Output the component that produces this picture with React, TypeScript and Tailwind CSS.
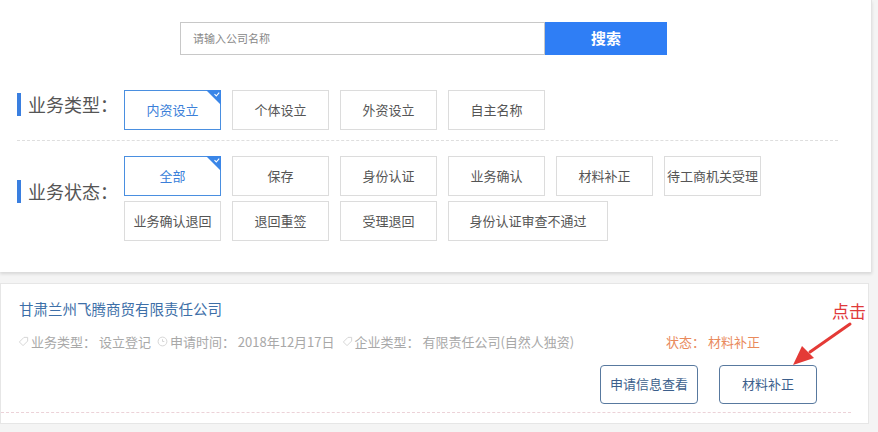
import React from 'react';

const typeOptions = ['内资设立', '个体设立', '外资设立', '自主名称'];
const statusRow1 = ['全部', '保存', '身份认证', '业务确认', '材料补正', '待工商机关受理'];
const statusRow2 = ['业务确认退回', '退回重签', '受理退回', '身份认证审查不通过'];

function CornerCheck() {
  return (
    <svg className="absolute -top-px -right-px" width="15" height="15" viewBox="0 0 15 15">
      <polygon points="0,0 15,0 15,15" fill="#3a86e8" />
      <path d="M8.5 4.2 L10.3 6 L13.2 2.6" stroke="#fff" strokeWidth="1.1" fill="none" />
    </svg>
  );
}

function OptionButton({ label, active, wide }: { label: string; active?: boolean; wide?: boolean }) {
  return (
    <div
      className={`relative flex h-[40px] items-center justify-center border text-[13px] ${
        wide ? 'w-[160px]' : 'w-[97px]'
      } ${active ? 'border-[#4a8fe0] text-[#3b7fd9]' : 'border-[#dcdcdc] text-[#555]'}`}
    >
      {label}
      {active && <CornerCheck />}
    </div>
  );
}

function SectionLabel({ text }: { text: string }) {
  return (
    <div className="flex w-[107px] shrink-0 items-center">
      <span className="h-[23px] w-[4px] bg-[#3a7fe0]" />
      <span className="ml-[7px] text-[18px] leading-[24px] text-[#555]">{text}</span>
    </div>
  );
}

function TagIcon() {
  return (
    <svg width="11" height="11" viewBox="0 0 12 12" className="mr-[2px]">
      <path d="M1.5 6.5 L6.5 1.5 H10.5 V5.5 L5.5 10.5 Z" fill="none" stroke="#d2d2d2" strokeWidth="1" />
    </svg>
  );
}

function ClockIcon() {
  return (
    <svg width="11" height="11" viewBox="0 0 12 12" className="mr-[2px]">
      <circle cx="6" cy="6" r="4.8" fill="none" stroke="#d2d2d2" strokeWidth="1" />
      <path d="M6 3.5 V6 H8" fill="none" stroke="#d2d2d2" strokeWidth="1" />
    </svg>
  );
}

export default function App() {
  return (
    <div className="relative h-[432px] w-[878px] overflow-hidden bg-[#f4f4f4] font-['Noto_Sans_CJK_SC',sans-serif]">
      {/* filter panel */}
      <div className="h-[272px] w-[872px] border-r border-[#e2e2e2] bg-white pt-[22px] shadow-[0_2px_3px_rgba(0,0,0,0.12)]">
        <div className="ml-[180px] flex">
          <div className="flex h-[33px] w-[365px] items-center border border-[#c8c8c8] pl-[12px] text-[11px] text-[#888]">
            请输入公司名称
          </div>
          <div className="flex h-[33px] w-[122px] items-center justify-center bg-[#2f7ef5] text-[15px] font-bold text-white">
            搜索
          </div>
        </div>

        <div className="mt-[35px] flex pl-[17px]">
          <div className="mt-[2px]">
            <SectionLabel text="业务类型：" />
          </div>
          <div className="flex gap-[11px]">
            {typeOptions.map((o, i) => (
              <OptionButton key={o} label={o} active={i === 0} />
            ))}
          </div>
        </div>

        <div className="ml-[17px] mt-[10px] w-[821px] border-t border-dashed border-[#dedede]" />

        <div className="mt-[15px] flex pl-[17px]">
          <div className="mt-[23px]">
            <SectionLabel text="业务状态：" />
          </div>
          <div className="flex flex-col gap-[5px]">
            <div className="flex gap-[11px]">
              {statusRow1.map((o, i) => (
                <OptionButton key={o} label={o} active={i === 0} />
              ))}
            </div>
            <div className="flex gap-[11px]">
              {statusRow2.map((o, i) => (
                <OptionButton key={o} label={o} wide={i === 3} />
              ))}
            </div>
          </div>
        </div>
      </div>

      {/* result card */}
      <div className="mt-[11px] h-[141px] w-[869px] border border-[#e6e6e6] bg-white">
        <div className="pl-[18px] pt-[15px] text-[14.5px] leading-[20px] text-[#3d6fa8]">甘肃兰州飞腾商贸有限责任公司</div>
        <div className="mt-[13px] flex items-center pl-[17px] text-[13px] text-[#a8a8a8]">
          <div className="flex items-center">
            <TagIcon />
            <span>业务类型： 设立登记</span>
          </div>
          <div className="ml-[6px] flex items-center">
            <ClockIcon />
            <span>申请时间： 2018年12月17日</span>
          </div>
          <div className="ml-[7px] flex items-center">
            <TagIcon />
            <span>企业类型： 有限责任公司(自然人独资)</span>
          </div>
          <div className="ml-auto mr-[108px] text-[#e98a5c]">状态： 材料补正</div>
        </div>
        <div className="mt-[13px] flex justify-end gap-[21px] pr-[51px]">
          <div className="flex h-[39px] w-[98px] items-center justify-center rounded-[4px] border border-[#58799f] text-[13px] text-[#3c5f8c]">
            申请信息查看
          </div>
          <div className="flex h-[39px] w-[98px] items-center justify-center rounded-[4px] border border-[#58799f] text-[13px] text-[#3c5f8c]">
            材料补正
          </div>
        </div>
        <div className="mt-[8px] w-[850px] border-t border-dashed border-[#ecd2d8]" />
      </div>

      {/* annotation */}
      <div className="absolute left-[832px] top-[300px] text-[17px] leading-[22px] text-[#e0393a]">点击</div>
      <svg className="absolute left-[780px] top-[318px]" width="80" height="56" viewBox="0 0 80 56">
        <path d="M70 6 L30 34" stroke="#e43a36" strokeWidth="3" strokeLinecap="round" />
        <polygon points="13,47 22,28 34,40" fill="#e43a36" />
      </svg>
    </div>
  );
}
